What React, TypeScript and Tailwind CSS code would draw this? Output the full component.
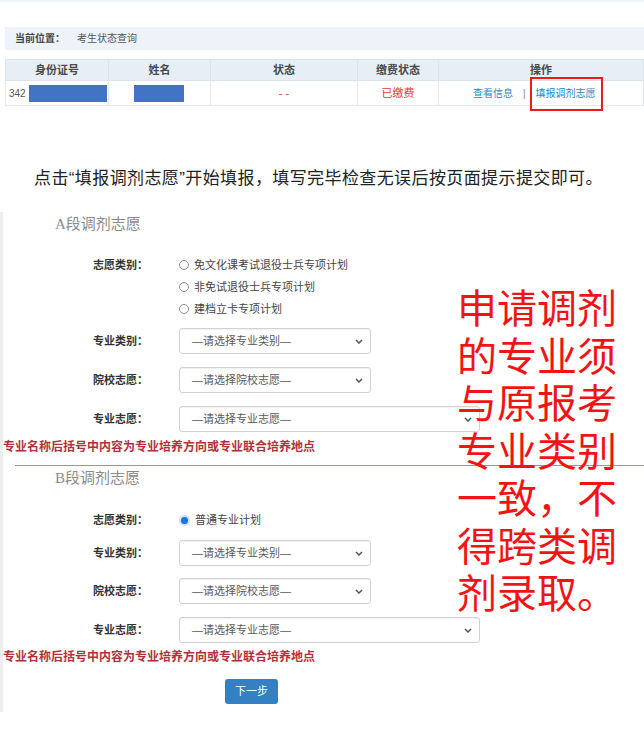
import React from "react";

const Chevron = () => (
  <svg width="8" height="5" viewBox="0 0 8 5" className="shrink-0">
    <path d="M1 1 L4 4 L7 1" fill="none" stroke="#555" strokeWidth="1.5" />
  </svg>
);

const Select = ({ text, wide }: { text: string; wide?: boolean }) => (
  <div
    className={`${wide ? "w-[301px]" : "w-[192px]"} h-[26px] border border-[#d2d2d2] rounded-[3px] bg-white shadow-[inset_0_1px_1px_rgba(0,0,0,0.06)] flex items-center justify-between pl-[12px] pr-[7px] text-[11px] text-[#5a5a5a]`}
  >
    <span>{text}</span>
    <Chevron />
  </div>
);

const Label = ({ children }: { children: React.ReactNode }) => (
  <div className="w-[145px] shrink-0 text-right text-[11px] font-bold text-[#333] leading-[22px]">{children}</div>
);

const Radio = ({ checked, text }: { checked?: boolean; text: string }) => (
  <div className="flex items-center h-[22px] gap-[5px] text-[11px] text-[#444]">
    {checked ? (
      <span className="w-[11px] h-[11px] rounded-full bg-[#cfe0fb] flex items-center justify-center">
        <span className="w-[7px] h-[7px] rounded-full bg-[#1a73e8]" />
      </span>
    ) : (
      <span className="w-[10px] h-[10px] rounded-full border border-[#8c8c8c] bg-white" />
    )}
    <span>{text}</span>
  </div>
);

const Row = ({ label, children, className }: { label: string; children: React.ReactNode; className?: string }) => (
  <div className={`flex items-center gap-[31px] ${className ?? ""}`}>
    <Label>{label}</Label>
    {children}
  </div>
);

const Note = ({ className }: { className?: string }) => (
  <div className={`text-[12px] leading-[16px] font-bold text-[#b3303a] ${className ?? ""}`}>
    专业名称后括号中内容为专业培养方向或专业联合培养地点
  </div>
);

const Title = ({ children, className }: { children: React.ReactNode; className?: string }) => (
  <div
    className={`pl-[52px] text-[15px] leading-[20px] text-[#8a8a8a] font-['Liberation_Serif','Noto_Sans_CJK_SC',serif] ${className ?? ""}`}
  >
    {children}
  </div>
);

export default function App() {
  return (
    <div className="w-[644px] h-[735px] bg-white overflow-hidden font-['Liberation_Sans','Noto_Sans_CJK_SC',sans-serif]">
      <div className="h-[2px] bg-[#eef4f9]" />
      {/* breadcrumb */}
      <div className="ml-[5px] mt-[25px] h-[23px] bg-[#eef3f9] flex items-center pl-[10px] text-[10px] text-[#555]">
        <span className="font-bold text-[#444]">当前位置：</span>
        <span className="ml-[12px]">考生状态查询</span>
      </div>
      {/* table */}
      <table className="ml-[5px] mt-[9px] w-[639px] table-fixed border-collapse text-[12px]">
        <colgroup>
          <col className="w-[103px]" />
          <col className="w-[102px]" />
          <col className="w-[147px]" />
          <col className="w-[81px]" />
          <col />
        </colgroup>
        <thead>
          <tr className="h-[21px] bg-[#e8eef6] text-[#4a4a4a]">
            <th className="border border-[#dce3ec] font-bold text-[11px]">身份证号</th>
            <th className="border border-[#dce3ec] font-bold text-[11px]">姓名</th>
            <th className="border border-[#dce3ec] font-bold text-[11px]">状态</th>
            <th className="border border-[#dce3ec] font-bold text-[11px]">缴费状态</th>
            <th className="border border-[#dce3ec] font-bold text-[11px]">操作</th>
          </tr>
        </thead>
        <tbody>
          <tr className="h-[25px] bg-white">
            <td className="border border-[#e3e8ef] p-0">
              <div className="flex items-center pl-[3px]">
                <span className="text-[10px] text-[#555]">342</span>
                <span className="ml-[3px] w-[78px] h-[17px] bg-[#4472c4]" />
              </div>
            </td>
            <td className="border border-[#e3e8ef] p-0">
              <div className="flex items-center pl-[25px]">
                <span className="w-[50px] h-[17px] bg-[#4472c4]" />
              </div>
            </td>
            <td className="border border-[#e3e8ef] text-center text-[#e53935] text-[11px]">- -</td>
            <td className="border border-[#e3e8ef] text-center text-[#e53935] text-[11px]">已缴费</td>
            <td className="border border-[#e3e8ef] text-[10px] text-[#2a86c4]">
              <div className="flex items-center pl-[34px] gap-[10px]">
                <span>查看信息</span>
                <span className="text-[#888]">|</span>
                <span className="relative">
                  填报调剂志愿
                  <span className="absolute left-[-6px] right-[-7px] top-[-9px] bottom-[-10px] border-2 border-[#e81c1c]" />
                </span>
              </div>
            </td>
          </tr>
        </tbody>
      </table>

      {/* instruction */}
      <p className="mt-[61px] pl-[34px] text-[17px] leading-[24px] tracking-[0.4px] text-[#222]">
        点击“填报调剂志愿”开始填报，填写完毕检查无误后按页面提示提交即可。
      </p>

      {/* form */}
      <div className="relative mt-[21px] h-[500px] border-l-[3px] border-[#eeeeee] bg-white">
        <Title className="pt-[2px]">A段调剂志愿</Title>
        <Row label="志愿类别：" className="mt-[20px] !items-start">
          <div className="flex flex-col">
            <Radio text="免文化课考试退役士兵专项计划" />
            <Radio text="非免试退役士兵专项计划" />
            <Radio text="建档立卡专项计划" />
          </div>
        </Row>
        <Row label="专业类别：" className="mt-[8px]">
          <Select text="—请选择专业类别—" />
        </Row>
        <Row label="院校志愿：" className="mt-[13px]">
          <Select text="—请选择院校志愿—" />
        </Row>
        <Row label="专业志愿：" className="mt-[13px]">
          <Select text="—请选择专业志愿—" wide />
        </Row>
        <Note className="mt-[7px]" />
        <div className="ml-[12px] mt-[10px] h-px bg-[#5fa6dc]" />

        <Title className="mt-[2px]">B段调剂志愿</Title>
        <Row label="志愿类别：" className="mt-[21px]">
          <Radio checked text="普通专业计划" />
        </Row>
        <Row label="专业类别：" className="mt-[9px]">
          <Select text="—请选择专业类别—" />
        </Row>
        <Row label="院校志愿：" className="mt-[12px]">
          <Select text="—请选择院校志愿—" />
        </Row>
        <Row label="专业志愿：" className="mt-[13px]">
          <Select text="—请选择专业志愿—" wide />
        </Row>
        <Note className="mt-[6px]" />
        <div className="mt-[13px] pl-[222px]">
          <button className="w-[53px] h-[25px] rounded-[3px] bg-[#3480c2] text-white text-[11px]">下一步</button>
        </div>

        {/* annotation */}
        <div className="absolute left-[454px] top-[71px] text-[40px] leading-[47.5px] text-[#f21414] font-['Noto_Sans_CJK_SC',sans-serif]">
          <div>申请调剂</div>
          <div>的专业须</div>
          <div>与原报考</div>
          <div>专业类别</div>
          <div>一致，不</div>
          <div>得跨类调</div>
          <div>剂录取。</div>
        </div>
      </div>
    </div>
  );
}
